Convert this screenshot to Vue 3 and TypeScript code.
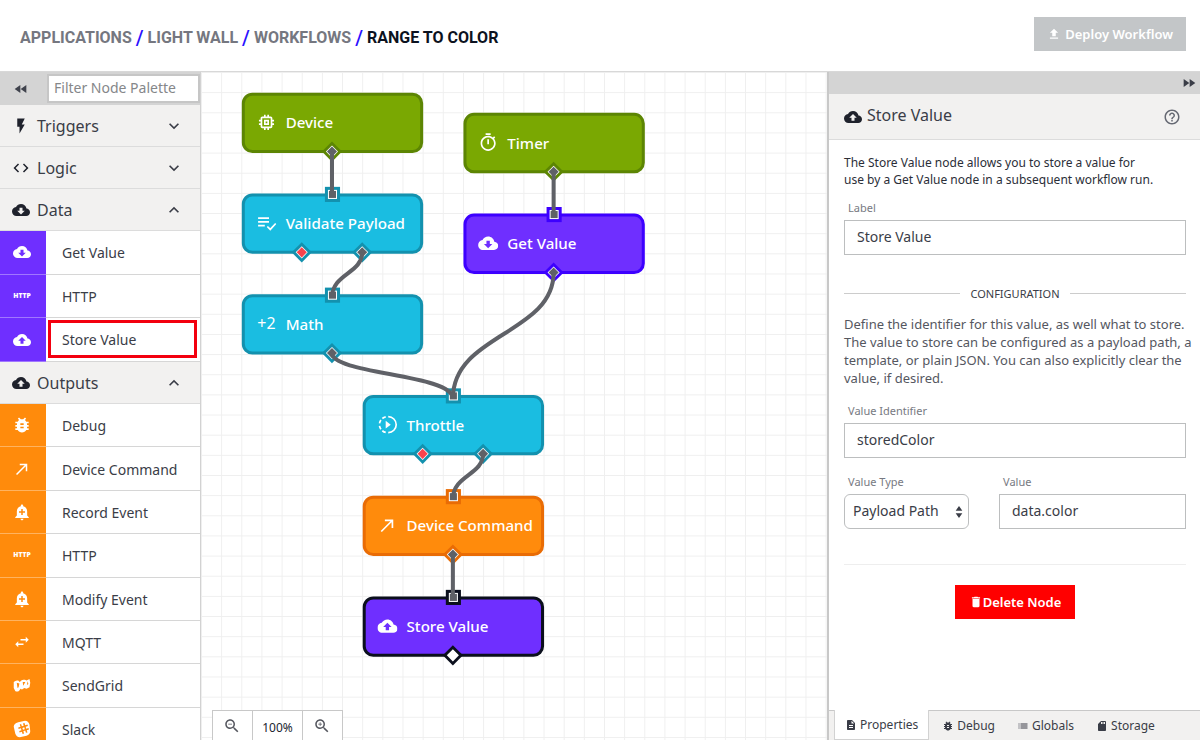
<script setup lang="ts">
import { h, ref } from 'vue'

const cloud = 'M19.35 10.04C18.67 6.59 15.64 4 12 4 9.11 4 6.6 5.64 5.35 8.04 2.34 8.36 0 10.91 0 14c0 3.31 2.69 6 6 6h13c2.76 0 5-2.24 5-5 0-2.64-2.05-4.78-4.65-4.96z'
const lens = 'M15.5 14h-.79l-.28-.27C15.41 12.59 16 11.11 16 9.5 16 5.91 13.09 3 9.5 3S3 5.91 3 9.5 5.91 16 9.5 16c1.61 0 3.09-.59 4.23-1.57l.27.28v.79l5 4.99L20.49 19l-4.99-5zm-6 0C7.01 14 5 11.99 5 9.5S7.01 5 9.5 5 14 7.01 14 9.5 11.99 14 9.5 14z'

const filled: Record<string, string> = {
  upload: cloud + 'M14 13v4h-4v-4H7l5-5 5 5h-3z',
  download: cloud + 'M17 13l-5 5-5-5h3V9h4v4h3z',
  rewind: 'M11 18V6l-8.5 6 8.5 6zm.5-6l8.5 6V6l-8.5 6z',
  forward: 'M4 18l8.5-6L4 6v12zm9-12v12l8.5-6L13 6z',
  flash: 'M7 2v11h3v9l7-12h-4l4-8z',
  code: 'M9.4 16.6L4.8 12l4.6-4.6L8 6l-6 6 6 6 1.4-1.4zm5.2 0l4.6-4.6-4.6-4.6L16 6l6 6-6 6-1.4-1.4z',
  more: 'M16.59 8.59L12 13.17 7.41 8.59 6 10l6 6 6-6z',
  less: 'M12 8l-6 6 1.41 1.41L12 10.83l4.59 4.58L18 14z',
  bug: 'M20 8h-2.81c-.45-.78-1.07-1.45-1.82-1.96L17 4.41 15.59 3l-2.17 2.17C12.96 5.06 12.49 5 12 5c-.49 0-.96.06-1.41.17L8.41 3 7 4.41l1.62 1.63C7.88 6.55 7.26 7.22 6.81 8H4v2h2.09c-.05.33-.09.66-.09 1v1H4v2h2v1c0 .34.04.67.09 1H4v2h2.81c1.04 1.79 2.97 3 5.19 3s4.15-1.21 5.19-3H20v-2h-2.09c.05-.33.09-.66.09-1v-1h2v-2h-2v-1c0-.34-.04-.67-.09-1H20V8zm-6 8h-4v-2h4v2zm0-4h-4v-2h4v2z',
  arrow: 'M9 5v2h6.59L4 18.59 5.41 20 17 8.41V15h2V5z',
  alert: 'M10.01 21.01c0 1.1.89 1.99 1.99 1.99s1.99-.89 1.99-1.99h-3.98zm8.87-4.19V11c0-3.25-2.25-5.97-5.29-6.69v-.72C13.59 2.71 12.88 2 12 2s-1.59.71-1.59 1.59v.72C7.37 5.03 5.12 7.75 5.12 11v5.82L3 18.94V20h18v-1.06l-2.12-2.12zM16 13.01h-3v3h-2v-3H8V11h3V8h2v3h3v2.01z',
  swap: 'M6.99 11L3 15l3.99 4v-3H14v-2H6.99v-3zM21 9l-3.99-4v3H10v2h7.01v3L21 9z',
  zoomOut: lens + 'M7 9h5v1H7z',
  zoomIn: lens + 'M12 10h-2v2H9v-2H7V9h2V7h1v2h2v1z',
  chip: 'M15 9H9v6h6V9zm-2 4h-2v-2h2v2zm8-2V9h-2V7c0-1.1-.9-2-2-2h-2V3h-2v2h-2V3H9v2H7c-1.1 0-2 .9-2 2v2H3v2h2v2H3v2h2v2c0 1.1.9 2 2 2h2v2h2v-2h2v2h2v-2h2c1.1 0 2-.9 2-2v-2h2v-2h-2v-2h2v-2zm-4 6H7V7h10v10z',
  timer: 'M15 1H9v2h6V1zm-4 13h2V8h-2v6zm8.03-6.61l1.42-1.42c-.43-.51-.9-.99-1.41-1.41l-1.42 1.42C16.07 4.74 14.12 4 12 4c-4.97 0-9 4.03-9 9s4.02 9 9 9 9-4.03 9-9c0-2.12-.74-4.07-1.97-5.61zM12 20c-3.87 0-7-3.13-7-7s3.13-7 7-7 7 3.13 7 7-3.13 7-7 7z',
  deploy: 'M9 16h6v-6h4l-7-7-7 7h4zm-4 2h14v2H5z',
  help: 'M11 18h2v-2h-2v2zm1-16C6.48 2 2 6.48 2 12s4.48 10 10 10 10-4.48 10-10S17.52 2 12 2zm0 18c-4.41 0-8-3.59-8-8s3.59-8 8-8 8 3.59 8 8-3.59 8-8 8zm0-14c-2.21 0-4 1.79-4 4h2c0-1.1.9-2 2-2s2 .9 2 2c0 2-3 1.75-3 5h2c0-2.25 3-2.5 3-5 0-2.21-1.79-4-4-4z',
  trash: 'M6 19c0 1.1.9 2 2 2h8c1.1 0 2-.9 2-2V7H6v12zM19 4h-3.5l-1-1h-5l-1 1H5v2h14V4z',
  doc: 'M14 2H6c-1.1 0-1.99.9-1.99 2L4 20c0 1.1.89 2 1.99 2H18c1.1 0 2-.9 2-2V8l-6-6zm2 16H8v-2h8v2zm0-4H8v-2h8v2zm-3-5V3.5L18.5 9H13z',
  list: 'M3 13h2v-2H3v2zm0 4h2v-2H3v2zm0-8h2V7H3v2zm4 4h14v-2H7v2zm0 4h14v-2H7v2zM7 7v2h14V7H7z',
  storage: 'M18 2h-8L4.02 8 4 20c0 1.1.9 2 2 2h12c1.1 0 2-.9 2-2V4c0-1.1-.9-2-2-2zm-6 6h-2V4h2v4zm3 0h-2V4h2v4zm3 0h-2V4h2v4z',
  updown: 'M12 3l5 7H7zM12 21l-5-7h10z',
  sendgrid: 'M1 8c2-2 4-2 6-2l2 2 2-2c2-1 4-1 5-1l2 1 4-2 1 5-1 6-4 2-3-1-3 2-2-1-2 3c-2 1-4 1-5 0L1 16zM5 9l1 7 1.500-1 1-5zM13 8l.5 5 3-5zM19.500 7l-1 5 2-1.500z',
  slack: 'M7 3l9-2c3 0 5 2 6 5l1 9c0 3-2 5-5 6l-9 2c-3 0-5-2-6-5L1 9c0-3 2-5 6-6zM9 6l1 3-3 1 .5 2 3-1 .8 2.500-3 1 .5 2 3-1 1 3 2-.6-1-3 2.500-.8 1 3 2-.6-1-3 3-1-.6-2-3 1-.8-2.500 3-1-.6-2-3 1-1-3-2 .6 1 3-2.500.8-1-3zM12.500 10.500l2.500-.8.8 2.500-2.500.8z',
}
const stroked: Record<string, string> = {
  check: 'M2 6h13M2 10.500h13M2 15h8M13 16l3.500 3.500 6.500-7',
  throttle: 'M13 2.500a9.500 9.500 0 0 1 0 19M10 2.700a9.500 9.500 0 0 0-4 2M4.300 6.500a9.500 9.500 0 0 0-1.700 4M2.600 13.500a9.500 9.500 0 0 0 1.700 4M6 19.300a9.500 9.500 0 0 0 4 2',
}
const glyphText: Record<string, string> = { http: 'HTTP', plus2: '+2' }

function Icon(props: { name: string; size?: number }) {
  const size = props.size ?? 18
  const base = { width: size, height: size, viewBox: '0 0 24 24', 'aria-hidden': 'true' }
  const { name } = props
  if (glyphText[name]) {
    const big = name === 'plus2'
    return h('svg', base, [h('text', {
      x: 12, y: big ? 18 : 15, 'text-anchor': 'middle', fill: 'currentColor',
      style: { fontSize: big ? '19px' : '9px', fontWeight: big ? 400 : 900 },
    }, glyphText[name])])
  }
  if (stroked[name]) {
    const parts = [h('path', { d: stroked[name], fill: 'none', stroke: 'currentColor', 'stroke-width': 2 })]
    if (name === 'throttle') parts.push(h('path', { d: 'M10 7.500v9l6-4.500z', fill: 'currentColor' }))
    return h('svg', base, parts)
  }
  return h('svg', base, [h('path', { d: filled[name], fill: 'currentColor', 'fill-rule': 'evenodd' })])
}
Icon.props = ['name', 'size']

const crumbs = ['Applications', 'Light Wall', 'Workflows']

interface Item { label: string; icon: string }
interface Group { title: string; icon: string; tone?: string; items: Item[] }
const groups: Group[] = [
  { title: 'Triggers', icon: 'flash', items: [] },
  { title: 'Logic', icon: 'code', items: [] },
  {
    title: 'Data', icon: 'download', tone: 'data', items: [
      { label: 'Get Value', icon: 'download' },
      { label: 'HTTP', icon: 'http' },
      { label: 'Store Value', icon: 'upload' },
    ],
  },
  {
    title: 'Outputs', icon: 'upload', tone: 'outputs', items: [
      { label: 'Debug', icon: 'bug' },
      { label: 'Device Command', icon: 'arrow' },
      { label: 'Record Event', icon: 'alert' },
      { label: 'HTTP', icon: 'http' },
      { label: 'Modify Event', icon: 'alert' },
      { label: 'MQTT', icon: 'swap' },
      { label: 'SendGrid', icon: 'sendgrid' },
      { label: 'Slack', icon: 'slack' },
    ],
  },
]
const highlighted = 'Store Value'

/* Workflow graph, on a grid with 20-unit cells */
interface Node { label: string; icon: string; x: number; y: number; tone: string; input: boolean; outs: { dx: number; kind: string }[] }
const one = [{ dx: 90, kind: 'linked' }]
const two = [{ dx: 60, kind: 'error' }, { dx: 120, kind: 'linked' }]
const nodes: Node[] = [
  { label: 'Device', icon: 'chip', x: 40, y: 20, tone: 'green', input: false, outs: one },
  { label: 'Timer', icon: 'timer', x: 260, y: 40, tone: 'green', input: false, outs: one },
  { label: 'Validate Payload', icon: 'check', x: 40, y: 120, tone: 'cyan', input: true, outs: two },
  { label: 'Get Value', icon: 'download', x: 260, y: 140, tone: 'violet', input: true, outs: one },
  { label: 'Math', icon: 'plus2', x: 40, y: 220, tone: 'cyan', input: true, outs: one },
  { label: 'Throttle', icon: 'throttle', x: 160, y: 320, tone: 'cyan', input: true, outs: two },
  { label: 'Device Command', icon: 'arrow', x: 160, y: 420, tone: 'orange', input: true, outs: one },
  { label: 'Store Value', icon: 'upload', x: 160, y: 520, tone: 'selected', input: true, outs: [{ dx: 90, kind: 'open' }] },
]
const ends = [
  [130, 79, 130, 121], [350, 99, 350, 141], [160, 179, 130, 221],
  [130, 279, 250, 321], [350, 199, 250, 321], [280, 379, 250, 421], [250, 479, 250, 521],
]
const links = ends.map(([x1, y1, x2, y2]) => {
  const mid = (y1 + y2) / 2
  return `M${x1} ${y1}C${x1} ${mid} ${x2} ${mid} ${x2} ${y2 + 3}`
})
const diamond = (r: number) => `M0 ${-r}L${r} 0L0 ${r}L${-r} 0z`

const filter = ref('')
const label = ref('Store Value')
const identifier = ref('storedColor')
const valueType = ref('Payload Path')
const value = ref('data.color')

const tabs = [
  { label: 'Properties', icon: 'doc' },
  { label: 'Debug', icon: 'bug' },
  { label: 'Globals', icon: 'list' },
  { label: 'Storage', icon: 'storage' },
]
const activeTab = ref('Properties')
</script>

<template>
  <div class="app">
    <header class="top">
      <nav class="crumbs" aria-label="Breadcrumb">
        <template v-for="c in crumbs" :key="c">
          <a href="#">{{ c }}</a><span class="slash">/</span>
        </template>
        <h1>Range to Color</h1>
      </nav>
      <button class="deploy" type="button" disabled><Icon name="deploy" :size="14" />Deploy Workflow</button>
    </header>

    <div class="work">
      <aside class="palette">
        <div class="filter">
          <button type="button" class="plain" aria-label="Collapse palette"><Icon name="rewind" :size="16" /></button>
          <input v-model="filter" type="text" placeholder="Filter Node Palette" aria-label="Filter Node Palette">
        </div>
        <section v-for="g in groups" :key="g.title">
          <button type="button" class="group">
            <Icon :name="g.icon" :size="18" />
            <span>{{ g.title }}</span>
            <Icon :name="g.items.length ? 'less' : 'more'" :size="20" />
          </button>
          <ul v-if="g.items.length" :class="['items', g.tone]">
            <li v-for="i in g.items" :key="i.label">
              <span class="tile"><Icon :name="i.icon" :size="i.icon === 'bug' ? 20 : 18" /></span>
              <span class="cell"><span :class="['name', { boxed: i.label === highlighted }]">{{ i.label }}</span></span>
            </li>
          </ul>
        </section>
      </aside>

      <main class="canvas">
        <svg class="graph" role="img" aria-label="Workflow graph">
          <defs>
            <pattern id="grid" width="20" height="20" patternUnits="userSpaceOnUse" patternTransform="scale(1.0075)">
              <path d="M0 0H20M0 0V20" class="gridline" />
            </pattern>
          </defs>
          <rect width="100%" height="100%" fill="url(#grid)" />
          <g transform="scale(1.0075)">
            <g v-for="n in nodes" :key="n.label" :transform="`translate(${n.x} ${n.y})`" :class="['node', n.tone]">
              <rect class="box" x="2" y="2" width="177" height="57" rx="9" />
              <svg x="15" y="20" width="22" height="22"><Icon :name="n.icon" :size="20" /></svg>
              <text x="44" y="36">{{ n.label }}</text>
              <template v-if="n.input">
                <rect class="port" x="83" y="-6" width="15" height="15" />
                <rect class="ring" x="86" y="-3" width="9" height="9" />
              </template>
              <g v-for="o in n.outs" :key="o.dx" :transform="`translate(${o.dx} 59)`">
                <path class="port" :d="diamond(10)" />
                <path class="ring" :d="diamond(6)" />
                <path :class="o.kind" :d="diamond(5)" />
              </g>
            </g>
            <path v-for="d in links" :key="d" :d="d" class="link" />
            <template v-for="n in nodes" :key="n.label">
              <rect v-if="n.input" class="linked" :x="n.x + 87" :y="n.y - 2" width="7" height="7" />
            </template>
          </g>
        </svg>
        <div class="zoom">
          <button type="button" aria-label="Zoom out"><Icon name="zoomOut" :size="18" /></button>
          <output>100%</output>
          <button type="button" aria-label="Zoom in"><Icon name="zoomIn" :size="18" /></button>
        </div>
      </main>

      <aside class="panel">
        <div class="bar"><button type="button" class="plain" aria-label="Collapse panel"><Icon name="forward" :size="16" /></button></div>
        <div class="title">
          <Icon name="upload" :size="18" />
          <h2>Store Value</h2>
          <button type="button" class="plain help" aria-label="Help"><Icon name="help" :size="18" /></button>
        </div>
        <form class="body" @submit.prevent>
          <p class="intro">The Store Value node allows you to store a value for<br>use by a Get Value node in a subsequent workflow run.</p>
          <div class="field">
            <label for="f-label">Label</label>
            <input id="f-label" v-model="label" type="text">
          </div>
          <h3>Configuration</h3>
          <p class="detail">Define the identifier for this value, as well what to store. The value to store can be configured as a payload path, a template, or plain JSON. You can also explicitly clear the value, if desired.</p>
          <div class="field">
            <label for="f-id">Value Identifier</label>
            <input id="f-id" v-model="identifier" type="text">
          </div>
          <div class="pair">
            <div class="field">
              <label for="f-type">Value Type</label>
              <div class="select">
                <select id="f-type" v-model="valueType">
                  <option>Payload Path</option>
                </select>
                <Icon name="updown" :size="16" />
              </div>
            </div>
            <div class="field">
              <label for="f-value">Value</label>
              <input id="f-value" v-model="value" type="text">
            </div>
          </div>
          <hr>
          <button type="button" class="delete"><Icon name="trash" :size="14" />Delete Node</button>
        </form>
        <div class="tabs" role="tablist">
          <button
            v-for="t in tabs" :key="t.label" type="button" role="tab"
            :aria-selected="t.label === activeTab" :class="{ active: t.label === activeTab }"
            @click="activeTab = t.label"
          ><Icon :name="t.icon" :size="12" />{{ t.label }}</button>
        </div>
      </aside>
    </div>
  </div>
</template>

<style>
body { margin: 0; }
</style>

<style scoped>
.app {
  height: 100vh;
  display: flex;
  flex-direction: column;
  overflow: hidden;
  background: #fff;
  color: #3a3d47;
  font-family: "Noto Sans", "Open Sans", sans-serif;
  font-size: 14px;
}
.app * { box-sizing: border-box; }
svg { display: block; flex: none; }
button, input, select { font: inherit; color: inherit; margin: 0; border-radius: 0; }
button { cursor: pointer; }
h1, h2, h3, p, ul { margin: 0; padding: 0; font-weight: inherit; }
.plain { border: 0; background: none; padding: 0; display: flex; }

.top {
  flex: none;
  height: 72px;
  display: flex;
  align-items: center;
  justify-content: space-between;
  padding: 0 14px 3px 20px;
  border-bottom: 1px solid #d8d8d8;
}
.crumbs {
  display: flex;
  align-items: center;
  padding-top: 8px;
  font-family: Roboto, sans-serif;
  font-weight: bold;
  font-size: 16px;
  line-height: 24px;
  text-transform: uppercase;
}
.crumbs a { color: #757780; text-decoration: none; }
.crumbs h1 { font-size: 16px; font-weight: bold; color: #0c1220; }
.slash { color: #2a10ff; padding: 0 4px; font-size: 20px; font-weight: 500; }
.deploy {
  display: flex;
  align-items: center;
  gap: 4px;
  height: 34px;
  padding: 0 13px 1px;
  border: 0;
  background: #c3c6c8;
  color: #fff;
  font-size: 13px;
  font-weight: 600;
}

.work { flex: 1; min-height: 0; display: grid; grid-template-columns: 201px minmax(0, 1fr) 373px; }

.palette { border-right: 1px solid #d2d2d2; overflow: hidden; }
.filter { display: flex; align-items: center; height: 33px; background: #d4d4d4; }
.filter .plain { width: 47px; padding-left: 13px; color: #3f424c; }
.filter input {
  flex: 1;
  min-width: 0;
  height: 29px;
  padding: 0 5px 2px;
  border: 2px solid #c6c6c6;
  background: #fff;
}
.filter input::placeholder { color: #85878a; opacity: 1; }
.group {
  display: flex;
  align-items: center;
  width: 100%;
  height: 42px;
  gap: 7px;
  padding: 0 16px 0 12px;
  border: 0;
  border-bottom: 1px solid #dcdcdc;
  background: #f2f1f0;
  font-size: 16px;
  text-align: left;
}
.group span { flex: 1; }
.group svg:first-child { color: #1f222c; }
.items { list-style: none; display: grid; grid-auto-rows: 1fr; }
.items.data { min-height: 131px; }
.items.outputs { min-height: 347px; }
.items li { display: flex; }
.tile {
  width: 46px;
  display: flex;
  align-items: center;
  justify-content: center;
  padding-right: 3px;
  border-bottom: 1px solid rgba(255, 255, 255, 0.35);
  color: #fff;
}
.data .tile { background: #6f2fff; }
.outputs .tile { background: #ff8b0c; }
.cell { flex: 1; display: flex; border-bottom: 1px solid #d6d6d6; }
.name { flex: 1; display: flex; align-items: center; padding: 1px 0 0 16px; }
.name.boxed { margin: 2px 3px 3px 2px; padding-left: 11px; border: 3px solid #f3000f; }

.canvas { position: relative; overflow: hidden; }
.graph { width: 100%; height: 100%; }
.gridline { fill: none; stroke: #efefef; stroke-width: 2; }
.node text { fill: #fff; font-size: 15px; font-weight: 500; }
.node { color: #fff; }
.box { fill: var(--fill); stroke: var(--edge); stroke-width: 3; }
.port { fill: var(--edge); }
.green { --fill: #7aa802; --edge: #5c8503; }
.cyan { --fill: #1abde1; --edge: #1391ae; }
.violet { --fill: #6f2fff; --edge: #3d00ff; }
.orange { --fill: #ff8b0c; --edge: #e96c05; }
.selected { --fill: #6f2fff; --edge: #0b0f1d; }
.ring, .open { fill: #fff; }
.linked { fill: #5f6167; }
.error { fill: #f8434d; }
.link { fill: none; stroke: #5f6167; stroke-width: 4; }
.zoom {
  position: absolute;
  left: 11px;
  bottom: 0;
  display: flex;
  height: 30px;
  border: 1px solid #c8c8c8;
  border-bottom: 0;
  background: #fff;
  color: #55575f;
}
.zoom button { width: 39px; padding: 0 10px; border: 0; background: none; }
.zoom output {
  width: 51px;
  padding-top: 4px;
  border: solid #c8c8c8;
  border-width: 0 1px;
  text-align: center;
  font-size: 12px;
  line-height: 26px;
  color: #22252f;
}

.panel { display: flex; flex-direction: column; min-height: 0; border-left: 2px solid #c8c8c8; }
.bar { flex: none; height: 22px; display: flex; align-items: center; justify-content: flex-end; padding-right: 3px; background: #d4d4d4; }
.title {
  flex: none;
  display: flex;
  align-items: center;
  gap: 5px;
  height: 46px;
  padding: 0 19px 0 15px;
  border-bottom: 1px solid #dcdcdc;
  background: #f2f1f0;
}
.title > svg { color: #1f222c; }
.title h2 { flex: 1; padding-bottom: 3px; font-size: 16px; }
.help { color: #666973; }
.body { flex: 1; min-height: 0; display: flex; flex-direction: column; padding: 14px 14px 0 15px; }
.intro { font-size: 12px; line-height: 17px; color: #2b2e38; }
.field { display: flex; flex-direction: column; }
.field label { padding-left: 4px; margin-bottom: 4px; font-size: 11px; line-height: 17px; color: #777982; }
.field input, .field select { width: 100%; height: 35px; padding: 0 12px 2px; border: 1px solid #bcbebf; background: #fff; }
.intro + .field { margin-top: 11px; }
h3 {
  display: flex;
  align-items: center;
  gap: 10px;
  margin-top: 30px;
  font-size: 11px;
  line-height: 17px;
  text-transform: uppercase;
}
h3::before, h3::after { content: ""; flex: 1; height: 1px; background: #ccc; }
.detail { margin: 13px -8px 15px 0; font-size: 13px; line-height: 18px; color: #55575f; }
.pair { display: grid; grid-template-columns: 125px 1fr; gap: 30px; margin-top: 15px; }
.select { position: relative; }
.field select { appearance: none; padding: 0 8px 2px; border-radius: 6px; }
.select svg { position: absolute; right: 2px; top: 10px; pointer-events: none; }
hr { width: 100%; height: 1px; margin: 35px 0 20px; border: 0; background: #eee; }
.delete {
  align-self: center;
  display: flex;
  align-items: center;
  height: 34px;
  padding: 0 14px 1px;
  border: 0;
  background: #f00;
  color: #fff;
  font-size: 13px;
  font-weight: 600;
}
.tabs { flex: none; display: flex; height: 30px; padding-left: 5px; border-top: 1px solid #c8c8c8; background: #f2f1f0; }
.tabs button { display: flex; align-items: center; gap: 3px; padding: 0 11px; border: 0; background: none; font-size: 12px; }
.tabs .active { margin: -1px 2px 0 0; padding: 0 10px; border: 1px solid #d2d2d2; border-top: 0; background: #fff; }
</style>
